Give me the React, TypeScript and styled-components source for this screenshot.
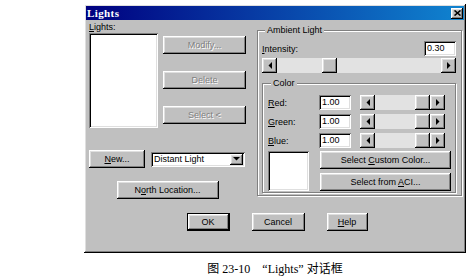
import React from 'react';
import styled, {createGlobalStyle, css} from 'styled-components';

const $face = '#c0c0c0';

const GlobalStyle = createGlobalStyle`
  html, body {
    margin: 0;
    background: #fff;
  }
  body {
    font-family: 'Liberation Sans', Arial, sans-serif;
    font-size: 9px;
    color: #000;
  }
`;

const raised = css`
  background: ${$face};
  box-shadow: inset -1px -1px #000, inset 1px 1px #fff, inset -2px -2px #808080,
    inset 2px 2px #dfdfdf;
`;

const sunken = css`
  background: #fff;
  box-shadow: inset 1px 1px #808080, inset -1px -1px #fff, inset 2px 2px #000,
    inset -2px -2px #dfdfdf;
`;

const Page = styled.div`
  width: 474px;
  height: 277px;
  padding: 4px 0 0 84px;
  box-sizing: border-box;
`;

const Dialog = styled.div`
  box-sizing: border-box;
  width: 382px;
  height: 249px;
  padding: 2px;
  display: flex;
  flex-direction: column;
  ${raised};
`;

const TitleBar = styled.div`
  height: 14px;
  display: flex;
  align-items: center;
  justify-content: space-between;
  padding: 0 1px 0 1px;
  background: linear-gradient(to right, #000080, #1084d0);
  color: #fff;
  font-family: 'Liberation Serif', 'Times New Roman', serif;
  font-weight: bold;
  font-size: 11px;
  letter-spacing: 0.4px;
`;

const CloseBtn = styled.div`
  width: 12px;
  height: 11px;
  display: flex;
  align-items: center;
  justify-content: center;
  ${raised};
`;

const Body = styled.div`
  flex: 1;
  display: flex;
  flex-direction: column;
  padding: 2px 2px 0 3px;
`;

const MainRow = styled.div`
  display: flex;
  align-items: flex-start;
  gap: 11px;
`;

const LeftCol = styled.div`
  width: 157px;
  display: flex;
  flex-direction: column;
`;

const Label = styled.div<{$w?: number}>`
  line-height: 10px;
  height: 10px;
  white-space: nowrap;
  ${({$w}) => ($w ? `width: ${$w}px; flex: none;` : '')}
`;

const U = styled.span`
  text-decoration: underline;
`;

const ListRow = styled.div`
  display: flex;
  gap: 5px;
  margin-top: 1px;
`;

const ListBox = styled.div`
  width: 69px;
  height: 95px;
  ${sunken};
`;

const SideButtons = styled.div`
  display: flex;
  flex-direction: column;
  gap: 17px;
  padding-top: 3px;
`;

const Button = styled.button<{$w: number; $default?: boolean}>`
  width: ${({$w}) => $w}px;
  height: 18px;
  flex: none;
  padding: 0;
  border: none;
  font-family: inherit;
  font-size: 9px;
  color: #000;
  white-space: nowrap;
  ${raised};
  ${({$default}) =>
    $default &&
    css`
      box-shadow: inset 0 0 0 1px #000, inset -2px -2px #000, inset 2px 2px #fff,
        inset -3px -3px #808080, inset 3px 3px #dfdfdf;
    `}
  &:disabled {
    color: #808080;
    text-shadow: 1px 1px #fff;
  }
`;

const NewRow = styled.div`
  display: flex;
  align-items: center;
  gap: 6px;
  margin-top: 22px;
`;

const Dropdown = styled.div`
  width: 94px;
  height: 15px;
  box-sizing: border-box;
  display: flex;
  align-items: center;
  justify-content: space-between;
  padding: 0 2px 0 3px;
  ${sunken};
`;

const DropBtn = styled.div`
  width: 13px;
  height: 11px;
  display: flex;
  align-items: center;
  justify-content: center;
  ${raised};
`;

const NorthRow = styled.div`
  display: flex;
  justify-content: center;
  margin-top: 13px;
`;

const Group = styled.fieldset<{$w?: number}>`
  margin: 0;
  min-width: 0;
  box-sizing: border-box;
  ${({$w}) => ($w ? `width: ${$w}px;` : '')}
  border: 1px solid #808080;
  box-shadow: inset 1px 1px #fff, 1px 1px #fff;
`;

const Legend = styled.legend`
  padding: 0 2px;
  margin-left: 3px;
  line-height: 10px;
  height: 10px;
  background: ${$face};
`;

const AmbientGroup = styled(Group)`
  margin-top: 3px;
  padding: 6px 5px 2px 4px;
`;

const IntensityRow = styled.div`
  display: flex;
  align-items: center;
  justify-content: space-between;
`;

const TextBox = styled.div<{$w: number}>`
  width: ${({$w}) => $w}px;
  height: 15px;
  flex: none;
  box-sizing: border-box;
  padding: 0 0 0 3px;
  line-height: 15px;
  ${sunken};
`;

const ScrollHolder = styled.div`
  margin-top: 2px;
`;

const ColorGroup = styled(Group)`
  margin-top: 5px;
  padding: 7px 4px 1px 5px;
`;

const ColorRows = styled.div`
  display: flex;
  flex-direction: column;
  gap: 4px;
`;

const ColorRow = styled.div`
  display: flex;
  align-items: center;
  gap: 9px;
`;

const LabelBox = styled.div`
  display: flex;
  align-items: center;
`;

const ColorBottom = styled.div`
  display: flex;
  gap: 11px;
  margin-top: 3px;
`;

const Swatch = styled.div`
  width: 41px;
  height: 40px;
  ${sunken};
`;

const SwatchButtons = styled.div`
  display: flex;
  flex-direction: column;
  gap: 4px;
`;

const Bar = styled.div<{$w: number}>`
  width: ${({$w}) => $w}px;
  height: 15px;
  flex: none;
  display: flex;
`;

const Arrow = styled.div`
  width: 15px;
  height: 15px;
  flex: none;
  display: flex;
  align-items: center;
  justify-content: center;
  ${raised};
`;

const Track = styled.div`
  flex: 1;
  display: flex;
  background: #e2e2e2;
`;

const Spacer = styled.div`
  flex-basis: 0;
`;

const Thumb = styled.div`
  width: 15px;
  flex: none;
  ${raised};
`;

const Footer = styled.div`
  display: flex;
  justify-content: center;
  gap: 22px;
  margin-top: 14px;
  padding-left: 3px;
`;

const Caption = styled.div`
  width: 382px;
  margin-top: 9px;
  text-align: center;
  white-space: pre;
  font-family: 'Liberation Serif', 'Noto Sans CJK SC', serif;
  font-size: 12px;
  line-height: 14px;
`;

function Tri({dir}: {dir: 'left' | 'right' | 'down'}) {
  const pts = {left: '4,0 4,7 0.5,3.5', right: '0,0 0,7 3.5,3.5', down: '0,0 7,0 3.5,3.5'}[dir];
  const [w, h] = dir === 'down' ? [7, 4] : [4, 7];
  return (
    <svg width={w} height={h} viewBox={`0 0 ${w} ${h}`}>
      <polygon points={pts} fill="#000" />
    </svg>
  );
}

function ScrollBar({value, width}: {value: number; width: number}) {
  return (
    <Bar $w={width}>
      <Arrow>
        <Tri dir="left" />
      </Arrow>
      <Track>
        <Spacer style={{flexGrow: value}} />
        <Thumb />
        <Spacer style={{flexGrow: 1 - value}} />
      </Track>
      <Arrow>
        <Tri dir="right" />
      </Arrow>
    </Bar>
  );
}

const channels = [
  {key: 'R', rest: 'ed:'},
  {key: 'G', rest: 'reen:'},
  {key: 'B', rest: 'lue:'},
];

export default function App() {
  return (
    <Page>
      <GlobalStyle />
      <Dialog>
        <TitleBar>
          <span>Lights</span>
          <CloseBtn>
            <svg width="7" height="6" viewBox="0 0 7 6">
              <path d="M0.5 0.5 L6.5 5.5 M6.5 0.5 L0.5 5.5" stroke="#000" strokeWidth="1.6" />
            </svg>
          </CloseBtn>
        </TitleBar>
        <Body>
          <MainRow>
            <LeftCol>
              <Label>
                <U>L</U>ights:
              </Label>
              <ListRow>
                <ListBox />
                <SideButtons>
                  <Button $w={83} disabled>
                    Modify...
                  </Button>
                  <Button $w={83} disabled>
                    Delete
                  </Button>
                  <Button $w={83} disabled>
                    Select &lt;
                  </Button>
                </SideButtons>
              </ListRow>
              <NewRow>
                <Button $w={56}>
                  <U>N</U>ew...
                </Button>
                <Dropdown>
                  <span>Distant Light</span>
                  <DropBtn>
                    <Tri dir="down" />
                  </DropBtn>
                </Dropdown>
              </NewRow>
              <NorthRow>
                <Button $w={102}>
                  N<U>o</U>rth Location...
                </Button>
              </NorthRow>
            </LeftCol>
            <AmbientGroup $w={205}>
              <Legend>Ambient Light</Legend>
              <IntensityRow>
                <Label>
                  <U>I</U>ntensity:
                </Label>
                <TextBox $w={32}>0.30</TextBox>
              </IntensityRow>
              <ScrollHolder>
                <ScrollBar value={0.3} width={194} />
              </ScrollHolder>
              <ColorGroup>
                <Legend>Color</Legend>
                <ColorRows>
                  {channels.map(c => (
                    <ColorRow key={c.key}>
                      <LabelBox>
                        <Label $w={51}>
                          <U>{c.key}</U>
                          {c.rest}
                        </Label>
                        <TextBox $w={32}>1.00</TextBox>
                      </LabelBox>
                      <ScrollBar value={1} width={85} />
                    </ColorRow>
                  ))}
                </ColorRows>
                <ColorBottom>
                  <Swatch />
                  <SwatchButtons>
                    <Button $w={131}>
                      Select <U>C</U>ustom Color...
                    </Button>
                    <Button $w={131}>
                      Select from <U>A</U>CI...
                    </Button>
                  </SwatchButtons>
                </ColorBottom>
              </ColorGroup>
            </AmbientGroup>
          </MainRow>
          <Footer>
            <Button $w={43} $default>
              OK
            </Button>
            <Button $w={53}>Cancel</Button>
            <Button $w={41}>
              <U>H</U>elp
            </Button>
          </Footer>
        </Body>
      </Dialog>
      <Caption>{'图 23-10    \u201cLights\u201d 对话框'}</Caption>
    </Page>
  );
}
